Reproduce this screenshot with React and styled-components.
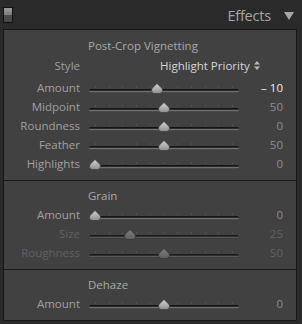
import React from "react";
import styled, { createGlobalStyle } from "styled-components";

const Global = createGlobalStyle`
  html, body { margin: 0; padding: 0; background: #2a2a2a; }
  body { font-family: "Open Sans", "Liberation Sans", sans-serif; }
`;

const Root = styled.div`
  width: 302px;
  height: 324px;
  background: #2a2a2a;
  overflow: hidden;
  position: relative;
`;

const Header = styled.div`
  height: 29px;
  display: flex;
  align-items: center;
  padding: 0 8px 0 3px;
  box-sizing: border-box;
`;

const Toggle = styled.div`
  width: 8px;
  height: 14px;
  border: 1px solid #121212;
  display: flex;
  flex-direction: column;
  margin-top: 1px;
`;

const ToggleHalf = styled.div`
  flex: 1;
  background: ${(p) => (p.$top ? "linear-gradient(#9a9a9a, #7c7c7c)" : "linear-gradient(#4e4e4e, #444)")};
`;

const Title = styled.div`
  margin-left: auto;
  font-size: 14.5px;
  color: #a6a6a6;
  letter-spacing: -0.2px;
  line-height: 29px;
  margin-top: 2px;
`;

const Arrow = styled.svg`
  margin-left: 13px;
  margin-top: 2px;
`;

const Panel = styled.div`
  margin-left: 3px;
  width: 294px;
  box-sizing: border-box;
  border: 1px solid #181818;
  background: #414141;
`;

const Section = styled.div`
  padding: ${(p) => (p.$first ? "6px" : "5px")} 0 7px;
  border-top: ${(p) => (p.$first ? "none" : "1px solid #1a1a1a")};
  display: grid;
  grid-template-columns: 84px 151px 44px;
`;

const SectionTitle = styled.div`
  grid-column: 2 / 4;
  font-size: 11.5px;
  line-height: 19px;
  height: 19px;
  color: #a9a9a9;
  margin-bottom: ${(p) => (p.$gap ? "1px" : "0")};
`;

const Label = styled.div`
  grid-column: 1;
  text-align: right;
  padding-right: 8px;
  font-size: 11.5px;
  line-height: 19px;
  height: ${(p) => (p.$tall ? "21px" : "19px")};
  margin-bottom: ${(p) => (p.$tall ? "1px" : "0")};
  color: ${(p) => (p.$disabled ? "#626262" : "#a0a0a0")};
`;

const StyleValue = styled.div`
  grid-column: 2 / 4;
  display: flex;
  align-items: center;
  height: 19px;
  padding-left: 72px;
  font-size: 11.5px;
  line-height: 19px;
  color: #d6d6d6;
  gap: 4px;
`;

const SliderBox = styled.div`
  grid-column: 2;
  position: relative;
  height: 19px;
  padding-top: 11px;
  box-sizing: border-box;
`;

const Track = styled.div`
  margin-left: 1px;
  width: 150px;
  height: 4px;
  border-radius: 2px;
  background: ${(p) =>
    p.$disabled
      ? "linear-gradient(#1c1c1c 0 1px, #2e2e2e 1px 2px, #585858 2px 3px, #3e3e3e 3px)"
      : "linear-gradient(#151515 0 1px, #2b2b2b 1px 2px, #707070 2px 3px, #4a4a4a 3px)"};
`;

const Ticks = styled.div`
  position: absolute;
  left: 7px;
  width: 139px;
  top: 8px;
  height: 2px;
  background: repeating-linear-gradient(to right, #555 0 1px, transparent 1px 13.7px);
  opacity: 0.8;
`;

const ThumbWrap = styled.div`
  position: absolute;
  top: 5px;
  width: 12px;
  height: 11px;
  line-height: 0;
`;

const Value = styled.div`
  grid-column: 3;
  text-align: right;
  font-size: 11.5px;
  line-height: 19px;
  height: 19px;
  color: ${(p) => (p.$bright ? "#ececec" : p.$disabled ? "#626262" : "#8e8e8e")};
`;

function Thumb({ disabled }) {
  const id = disabled ? "thumbD" : "thumbN";
  return (
    <svg width="12" height="11" viewBox="0 0 12 11">
      <defs>
        <linearGradient id={id} x1="0" y1="0" x2="0" y2="1">
          <stop offset="0" stopColor={disabled ? "#808080" : "#d4d4d4"} />
          <stop offset="1" stopColor={disabled ? "#5e5e5e" : "#8e8e8e"} />
        </linearGradient>
      </defs>
      <path
        d="M6 0.5 L10.8 5.2 Q11.5 6 11.5 7.2 Q11.5 10.5 8.5 10.5 L3.5 10.5 Q0.5 10.5 0.5 7.2 Q0.5 6 1.2 5.2 Z"
        fill={`url(#${id})`}
        stroke={disabled ? "#2a2a2a" : "#333"}
        strokeWidth="0.6"
      />
    </svg>
  );
}

function SliderRow({ label, value, display, min = 0, max = 100, disabled, bright }) {
  const p = (value - min) / (max - min);
  return (
    <>
      <Label $disabled={disabled}>{label}</Label>
      <SliderBox>
        <Ticks />
        <Track $disabled={disabled} />
        <ThumbWrap style={{ left: `calc(1px + ${p} * 138px)` }}>
          <Thumb disabled={disabled} />
        </ThumbWrap>
      </SliderBox>
      <Value $disabled={disabled} $bright={bright}>
        {display ?? value}
      </Value>
    </>
  );
}

export default function App() {
  return (
    <Root>
      <Global />
      <Header>
        <Toggle>
          <ToggleHalf $top />
          <ToggleHalf />
        </Toggle>
        <Title>Effects</Title>
        <Arrow width="10" height="8" viewBox="0 0 10 8">
          <path d="M0 0 L10 0 L5 8 Z" fill="#a6a6a6" />
        </Arrow>
      </Header>
      <Panel>
        <Section $first>
          <SectionTitle $gap>Post-Crop Vignetting</SectionTitle>
          <Label $tall>Style</Label>
          <StyleValue>
            Highlight Priority
            <svg width="6" height="9" viewBox="0 0 6 9">
              <path d="M0 3.5 L3 0 L6 3.5 Z M0 5.5 L6 5.5 L3 9 Z" fill="#b8b8b8" />
            </svg>
          </StyleValue>
          <SliderRow label="Amount" value={-10} display="– 10" min={-100} max={100} bright />
          <SliderRow label="Midpoint" value={50} />
          <SliderRow label="Roundness" value={0} min={-100} max={100} />
          <SliderRow label="Feather" value={50} />
          <SliderRow label="Highlights" value={0} />
        </Section>
        <Section>
          <SectionTitle>Grain</SectionTitle>
          <SliderRow label="Amount" value={0} />
          <SliderRow label="Size" value={25} disabled />
          <SliderRow label="Roughness" value={50} disabled />
        </Section>
        <Section>
          <SectionTitle>Dehaze</SectionTitle>
          <SliderRow label="Amount" value={0} min={-100} max={100} />
        </Section>
      </Panel>
    </Root>
  );
}
